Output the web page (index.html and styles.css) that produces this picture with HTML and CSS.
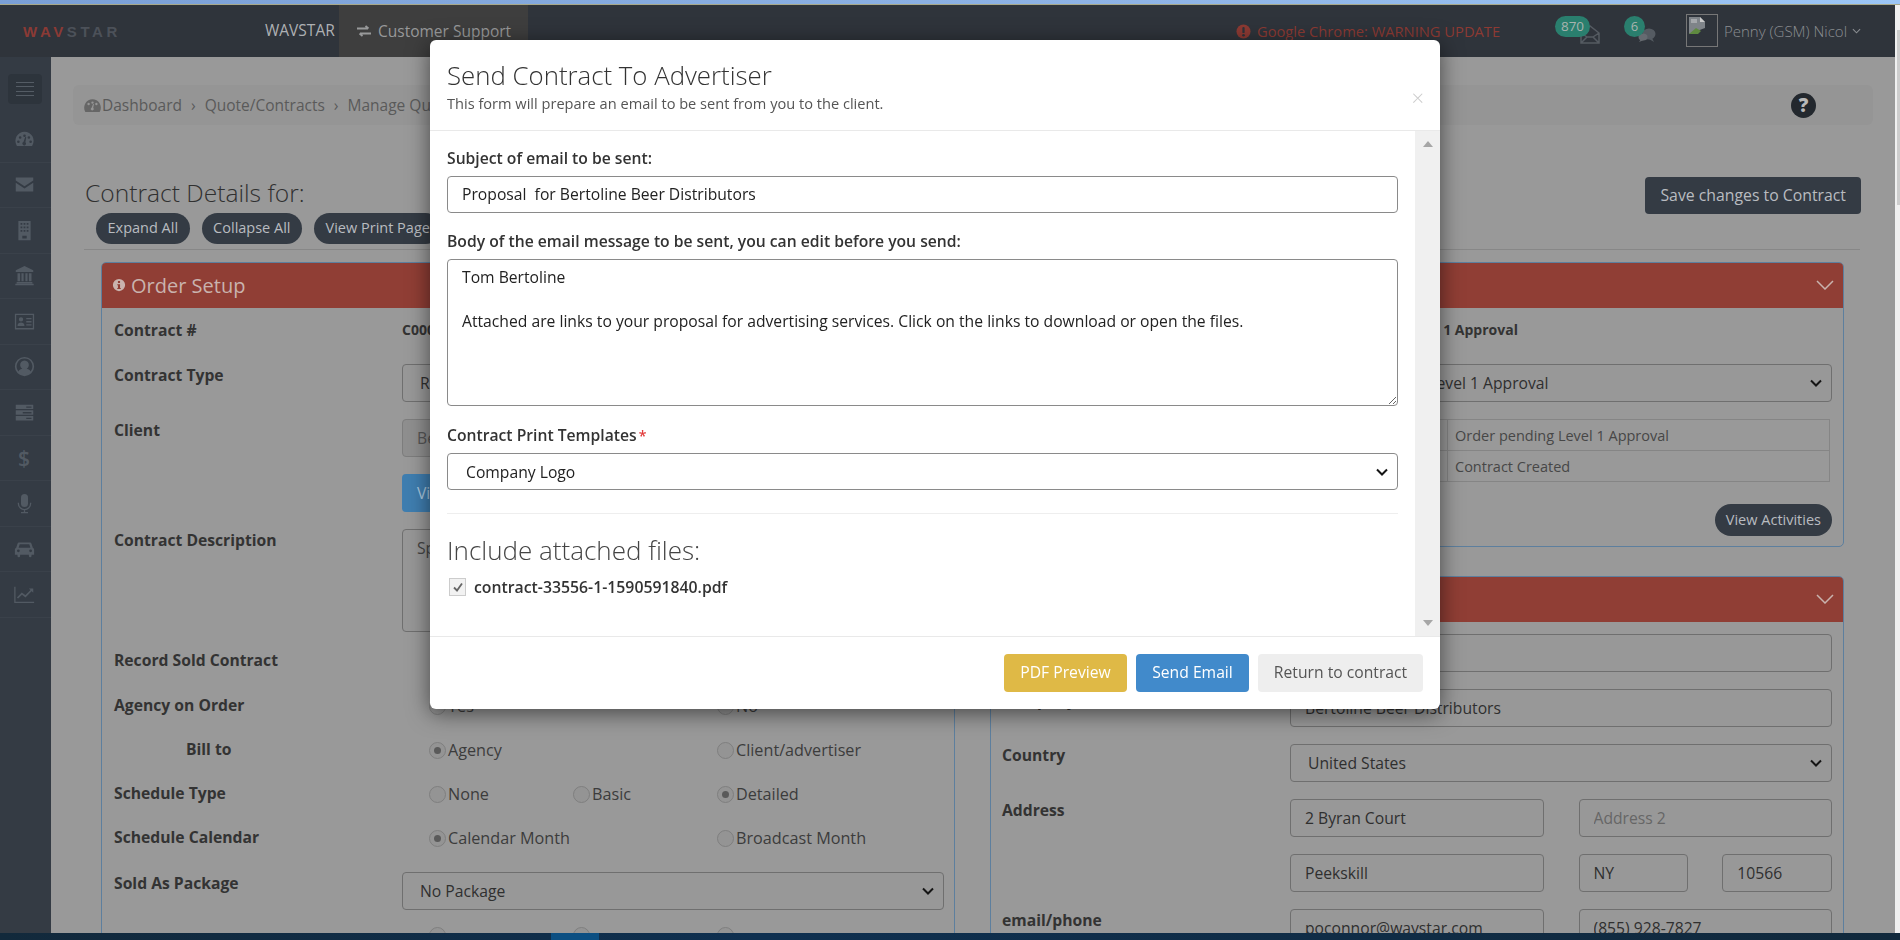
FILE: index.html
```html
<!DOCTYPE html>
<html lang="en">
<head>
<meta charset="utf-8">
<title>Send Contract To Advertiser</title>
<link rel="stylesheet" href="styles.css">
</head>
<body>
<div class="strip"></div>
<div class="window">
  <div class="app">
    <header class="topbar">
      <div class="logo"><span class="logo-a">WAV</span><span class="logo-b">STAR</span></div>
      <div class="brand">WAVSTAR</div>
      <div class="support">
        <svg class="swap" viewBox="0 0 16 12"><path d="M1 3.500h11M9.500 1l3 2.500M15 8.500H4M6.500 11l-3-2.500" fill="none" stroke="currentColor" stroke-width="1.800"/></svg>
        <span>Customer Support</span>
      </div>
      <div class="warning">
        <svg class="warn-ic" viewBox="0 0 16 16"><circle cx="8" cy="8" r="7.500" fill="currentColor"/><rect x="6.800" y="3.200" width="2.400" height="6.500" rx="1" fill="#2f343b"/><circle cx="8" cy="12" r="1.400" fill="#2f343b"/></svg>
        <span>Google Chrome: WARNING UPDATE</span>
      </div>
      <div class="notif notif-mail">
        <svg class="notif-ic" viewBox="0 0 20 19"><path d="M1 8 10 1l9 7v10H1zM1 18l6-6h6l6 6M1 8l6 4M19 8l-6 4" fill="none" stroke="currentColor" stroke-width="1.500"/></svg>
        <span class="badge badge-wide">870</span>
      </div>
      <div class="notif notif-chat">
        <svg class="notif-ic chat-ic" viewBox="0 0 18 15"><ellipse cx="11" cy="6" rx="6.500" ry="5.500" fill="currentColor"/><path d="M14 10l2 4-5-3z" fill="currentColor"/><ellipse cx="5" cy="9" rx="4.500" ry="3.500" fill="#666b71"/><path d="M3 11l-2 3 5-2z" fill="#666b71"/></svg>
        <span class="badge">6</span>
      </div>
      <div class="avatar">
        <svg class="broken" viewBox="0 0 18 20"><path d="M1 1h11l5 5v6L1 18z" fill="#7f8489"/><path d="M1 18l7-6 5 3-3 3z" fill="#5f8a40"/><path d="M3 3h6v4H3z" fill="#a5a8ac"/><path d="M12 1v5h5" fill="#c9c9c9"/></svg>
      </div>
      <div class="username">Penny (GSM) Nicol</div>
      <svg class="user-chev" viewBox="0 0 10 6"><path d="M1 1l4 4 4-4" fill="none" stroke="currentColor" stroke-width="1.200"/></svg>
    </header>

    <div class="main">
      <nav class="sidebar">
        <div class="side-top">
          <div class="toggle"><i></i><i></i><i></i><i></i></div>
        </div>
        <div class="side-item"><svg class="side-ic" viewBox="0 0 24 24"><path fill-rule="evenodd" d="M12 3a10.500 10.500 0 0 0-9 15.800c.300.500.8.700 1.300.7h15.400c.5 0 1-.2 1.300-.7A10.500 10.500 0 0 0 12 3zM7 8.200a1.500 1.500 0 1 1 0 3 1.500 1.500 0 0 1 0-3zm5-2a1.500 1.500 0 1 1 0 3 1.500 1.500 0 0 1 0-3zm5 2a1.500 1.500 0 1 1 0 3 1.500 1.500 0 0 1 0-3zM5 13a1.500 1.500 0 1 1 0 3 1.500 1.500 0 0 1 0-3zm14 0a1.500 1.500 0 1 1 0 3 1.500 1.500 0 0 1 0-3zM14 9.500l-1 5.700a2 2 0 1 1-2.200-.3l2-5.700z"/></svg></div>
        <div class="side-item"><svg class="side-ic" viewBox="0 0 24 24"><path d="M2 4h20v3.500L12 14 2 7.500zM2 10l10 6.500L22 10v10H2z"/></svg></div>
        <div class="side-item"><svg class="side-ic" viewBox="0 0 24 24"><path fill-rule="evenodd" d="M5 1h14v22H5zM7.500 3.500v2h2v-2zm3.500 0v2h2v-2zm3.500 0v2h2v-2zM7.500 7.500v2h2v-2zm3.500 0v2h2v-2zm3.500 0v2h2v-2zM7.500 11.500v2h2v-2zm3.500 0v2h2v-2zm3.500 0v2h2v-2zM9.500 18v3h5v-3z"/></svg></div>
        <div class="side-item"><svg class="side-ic" viewBox="0 0 24 24"><path d="M12 1 2 6v2h20V6zM4 9.500h3v9H4zM8.500 9.500h2.500v9H8.500zM13 9.500h2.500v9H13zM17 9.500h3v9h-3zM3 19.500h18V21H3zM1.500 21.500h21V23h-21z"/></svg></div>
        <div class="side-item"><svg class="side-ic" viewBox="0 0 24 24"><path fill-rule="evenodd" d="M1 3h22v18H1zM2.500 4.500v15h19v-15zM8 7a2.500 2.500 0 1 1 0 5 2.500 2.500 0 0 1 0-5zM4 17c0-3 2-4 4-4s4 1 4 4zM14 8h6v1.500h-6zM14 11.500h6V13h-6zM14 15h6v1.500h-6z"/></svg></div>
        <div class="side-item"><svg class="side-ic" viewBox="0 0 24 24"><path fill-rule="evenodd" d="M12 1a11 11 0 1 1 0 22 11 11 0 0 1 0-22zm0 2a9 9 0 0 0-7 14.700C6 15.500 8 15 9.500 14.500a5 5 0 1 1 5 0c1.500.5 3.500 1 4.500 3.200A9 9 0 0 0 12 3z"/></svg></div>
        <div class="side-item"><svg class="side-ic" viewBox="0 0 24 24"><path fill-rule="evenodd" d="M2 3h20v5H2zM2 9.500h20v5H2zM2 16h20v5H2zM14 5v1.500h6V5zM10 11.500V13h10v-1.500zM14 18v1.500h6V18z"/></svg></div>
        <div class="side-item side-dollar">$</div>
        <div class="side-item"><svg class="side-ic" viewBox="0 0 24 24"><path d="M8 5a4 4 0 0 1 8 0v7a4 4 0 0 1-8 0z"/><path d="M5 11v1a7 7 0 0 0 14 0v-1M12 19v3M8 22.500h8" fill="none" stroke="currentColor" stroke-width="1.500"/></svg></div>
        <div class="side-item"><svg class="side-ic" viewBox="0 0 24 24"><path fill-rule="evenodd" d="M6 5h12c1 0 1.700.6 2 1.500L21.500 11c1 .5 1.500 1.300 1.500 2.500V19h-3v1.500a1.500 1.500 0 0 1-3 0V19H7v1.500a1.500 1.500 0 0 1-3 0V19H1v-5.500c0-1.200.5-2 1.500-2.500L4 6.500C4.300 5.600 5 5 6 5zm.5 2L5.300 11h13.400l-1.200-4zM5 13a1.600 1.600 0 1 0 0 3.200A1.600 1.600 0 0 0 5 13zm14 0a1.600 1.600 0 1 0 0 3.200 1.600 1.600 0 0 0 0-3.200z"/></svg></div>
        <div class="side-item"><svg class="side-ic" viewBox="0 0 24 24"><path d="M1 3v18h22" fill="none" stroke="currentColor" stroke-width="1.500"/><path d="M4 16l5-5 4 3 8-8" fill="none" stroke="currentColor" stroke-width="2"/><path d="M17 5h5v5z"/></svg></div>
      </nav>

      <div class="content">
        <div class="crumbs">
          <svg class="crumb-ic" viewBox="0 0 24 20"><path fill-rule="evenodd" d="M12 1A12 12 0 0 0 1.500 18.300c.3.500.8.700 1.300.7h18.400c.5 0 1-.2 1.300-.7A12 12 0 0 0 12 1zM6.500 6.200a1.700 1.700 0 1 1 0 3.400 1.700 1.700 0 0 1 0-3.400zm5.500-2a1.700 1.700 0 1 1 0 3.400 1.700 1.700 0 0 1 0-3.400zm5.500 2a1.700 1.700 0 1 1 0 3.400 1.700 1.700 0 0 1 0-3.400zM14 8l-1 5.500a2 2 0 1 1-2.200-.3l2-5.200z"/></svg>
          <span class="crumb-first">Dashboard</span>
          <span class="crumb-sep">&rsaquo;</span>
          <span>Quote/Contracts</span>
          <span class="crumb-sep">&rsaquo;</span>
          <span>Manage Quotes/Contracts</span>
          <span class="help">?</span>
        </div>

        <div class="title-row">
          <div class="title-left">
            <h1 class="page-title">Contract Details for:</h1>
            <div class="pill-row">
              <span class="pill">Expand All</span>
              <span class="pill">Collapse All</span>
              <span class="pill">View Print Page</span>
            </div>
          </div>
          <span class="save-btn">Save changes to Contract</span>
        </div>

        <div class="columns">
          <section class="panel panel-left">
            <div class="panel-head">
              <svg class="info-ic" viewBox="0 0 16 16"><path fill-rule="evenodd" d="M8 1a7 7 0 1 1 0 14A7 7 0 0 1 8 1zM6.800 3.500v2.200h2.400V3.500zM6 7v1.300h.8v3H6v1.300h4v-1.300h-.8V7z"/></svg>
              <span>Order Setup</span>
            </div>
            <div class="panel-body">
              <div class="row row-short"><label class="lbl">Contract #</label><div class="val-bold">C00033556</div></div>
              <div class="row"><label class="lbl">Contract Type</label><select class="ctl"><option>Regular</option></select></div>
              <div class="row"><label class="lbl">Client</label><input class="ctl ctl-off" value="Bertoline Beer Distributors"></div>
              <div class="row"><span></span><div><span class="view-btn">View Client</span></div></div>
              <div class="row"><label class="lbl">Contract Description</label><textarea class="ctl ctl-area">Spot</textarea></div>
              <div class="row row-record"><label class="lbl">Record Sold Contract</label><div></div></div>
              <div class="row row-radio"><label class="lbl">Agency on Order</label>
                <div class="radios"><span class="opt"><i class="radio"></i>Yes</span><span></span><span class="opt"><i class="radio"></i>No</span></div></div>
              <div class="row row-radio"><label class="lbl lbl-in">Bill to</label>
                <div class="radios"><span class="opt"><i class="radio on"></i>Agency</span><span></span><span class="opt"><i class="radio"></i>Client/advertiser</span></div></div>
              <div class="row row-radio"><label class="lbl">Schedule Type</label>
                <div class="radios"><span class="opt"><i class="radio"></i>None</span><span class="opt"><i class="radio"></i>Basic</span><span class="opt"><i class="radio on"></i>Detailed</span></div></div>
              <div class="row row-radio row-tall"><label class="lbl">Schedule Calendar</label>
                <div class="radios"><span class="opt"><i class="radio on"></i>Calendar Month</span><span></span><span class="opt"><i class="radio"></i>Broadcast Month</span></div></div>
              <div class="row"><label class="lbl">Sold As Package</label><select class="ctl"><option>No Package</option></select></div>
              <div class="row row-radio"><span></span>
                <div class="radios"><span class="opt"><i class="radio"></i></span><span class="opt"><i class="radio"></i></span><span class="opt"><i class="radio"></i></span></div></div>
            </div>
          </section>

          <div class="col-right">
            <section class="panel panel-status">
              <div class="panel-head">
                <svg class="head-chev" viewBox="0 0 18 10"><path d="M1 1l8 8 8-8" fill="none" stroke="currentColor" stroke-width="1.500"/></svg>
              </div>
              <div class="panel-body">
                <div class="row row-short"><span></span><div class="val-bold val-status">Order pending Level 1 Approval</div></div>
                <div class="row"><span></span><select class="ctl ctl-status"><option>Order pending Level 1 Approval</option></select></div>
                <table class="log">
                  <tr><td class="log-date"></td><td>Order pending Level 1 Approval</td></tr>
                  <tr><td class="log-date"></td><td>Contract Created</td></tr>
                </table>
                <div class="act-row"><span class="pill pill-act">View Activities</span></div>
              </div>
            </section>

            <section class="panel panel-client">
              <div class="panel-head">
                <svg class="head-chev" viewBox="0 0 18 10"><path d="M1 1l8 8 8-8" fill="none" stroke="currentColor" stroke-width="1.500"/></svg>
              </div>
              <div class="panel-body">
                <div class="row row-wide"><span></span><input class="ctl"></div>
                <div class="row row-wide"><label class="lbl">Company</label><input class="ctl" value="Bertoline Beer Distributors"></div>
                <div class="row row-wide"><label class="lbl">Country</label><select class="ctl"><option>United States</option></select></div>
                <div class="row row-wide"><label class="lbl">Address</label>
                  <div class="split"><input class="ctl" value="2 Byran Court"><input class="ctl" placeholder="Address 2"></div></div>
                <div class="row row-wide"><span></span>
                  <div class="split"><input class="ctl" value="Peekskill">
                    <div class="split-small"><input class="ctl" value="NY"><input class="ctl" value="10566"></div></div></div>
                <div class="row row-wide"><label class="lbl">email/phone</label>
                  <div class="split"><input class="ctl" value="poconnor@waystar.com"><input class="ctl" value="(855) 928-7827"></div></div>
              </div>
            </section>
          </div>
        </div>
      </div>
    </div>
  </div>
  <div class="pagebar"><div class="pagebar-thumb"></div></div>
</div>
<div class="taskbar"><span class="task-active"></span></div>

<div class="modal" role="dialog">
  <div class="modal-head">
    <h2 class="modal-title">Send Contract To Advertiser</h2>
    <p class="modal-sub">This form will prepare an email to be sent from you to the client.</p>
    <span class="modal-close">&times;</span>
  </div>
  <div class="modal-body">
    <form class="modal-form">
      <label class="m-label">Subject of email to be sent:</label>
      <input class="m-input m-line" value="Proposal  for Bertoline Beer Distributors">
      <label class="m-label">Body of the email message to be sent, you can edit before you send:</label>
      <textarea class="m-input m-area">Tom Bertoline

Attached are links to your proposal for advertising services. Click on the links to download or open the files.</textarea>
      <label class="m-label m-label-tight">Contract Print Templates<span class="req">*</span></label>
      <select class="m-input m-select"><option>Company Logo</option></select>
      <hr class="m-rule">
      <h3 class="m-heading">Include attached files:</h3>
      <div class="m-file">
        <span class="check"><svg viewBox="0 0 12 12"><path d="M2 6.500l3 3 5-7" fill="none" stroke="#666" stroke-width="1.800"/></svg></span>
        <span>contract-33556-1-1590591840.pdf</span>
      </div>
    </form>
    <div class="m-scroll"><i class="arrow-up"></i><i class="arrow-down"></i></div>
  </div>
  <div class="modal-foot">
    <span class="btn btn-pdf">PDF Preview</span>
    <span class="btn btn-send">Send Email</span>
    <span class="btn btn-back">Return to contract</span>
  </div>
</div>
</body>
</html>
```
FILE: styles.css
```css
* { box-sizing: border-box; }
html, body { margin: 0; height: 940px; overflow: hidden; }
body { font-family: "Open Sans", "Liberation Sans", sans-serif; font-size: 15.7px; color: #3a3a3a; background: #999; }

.strip { height: 5px; background: linear-gradient(90deg, #7a9fd6, #8fb4e6 60%, #9cc6f6); border-bottom: 1px solid #a9a98a; }
.window { height: 928px; display: flex; overflow: hidden; }
.app { width: 1895px; display: flex; flex-direction: column; }
.pagebar { width: 5px; background: #f0f0f0; padding: 25px 0 0 2px; }
.pagebar-thumb { height: 175px; background: #cdcdcd; }
.taskbar { height: 7px; background: linear-gradient(90deg, #12293b, #0f3050 40%, #11293c); padding-left: 551px; }
.task-active { display: block; width: 48px; height: 7px; background: #0c4f82; }

/* top bar */
.topbar { height: 52px; flex: none; background: #2f343b; display: flex; align-items: center; color: #aeb0b3; }
.logo { width: 265px; padding-left: 23px; font: 700 15px "Liberation Sans", sans-serif; letter-spacing: 3.6px; }
.logo-a { color: #8b3a35; }
.logo-b { color: #4c5159; }
.brand { width: 74px; font-size: 15.5px; margin-top: -3px; }
.support { width: 189px; height: 52px; background: #3e3e3e; display: flex; align-items: center; gap: 6px; padding-left: 17px; font-size: 15.5px; color: #98999a; }
.swap { width: 16px; height: 12px; }
.warning { margin-left: 708px; width: 319px; display: flex; align-items: center; gap: 6px; color: #8d3a33; font-size: 14.7px; }
.warn-ic { width: 15px; height: 15px; }
.notif { position: relative; height: 52px; }
.notif-mail { width: 69px; }
.notif-chat { width: 62px; }
.badge { position: absolute; top: 11px; left: 0; min-width: 21px; height: 21px; border-radius: 10.5px; background: #2a7f6e; color: #a8b3ae; font-size: 13px; line-height: 20px; text-align: center; padding: 0 3px; }
.badge-wide { width: 35px; font-size: 13.5px; }
.notif-ic { position: absolute; color: #555b62; }
.notif-mail .notif-ic { left: 25px; top: 20px; width: 20px; height: 19px; }
.chat-ic { left: 14px; top: 23px; width: 18px; height: 15px; }
.avatar { width: 32px; height: 33px; border: 1px solid #777; margin-top: -1px; padding: 1px 0 0 1px; }
.broken { display: block; width: 18px; height: 20px; }
.username { margin-left: 6px; width: 128px; font-weight: 300; font-size: 15px; color: #8b8e92; }
.user-chev { width: 9px; height: 6px; color: #8b8e92; }

/* sidebar */
.main { flex: 1; display: flex; min-height: 0; }
.sidebar { width: 51px; flex: none; background: #343b44; color: #525a63; }
.side-top { height: 60px; padding: 17px 0 0 8px; }
.toggle { width: 34px; height: 30px; background: #2d343c; border-radius: 4px; display: flex; flex-direction: column; gap: 3.4px; padding: 8px 8px; }
.toggle i { display: block; height: 1px; background: #545c65; }
.side-item { height: 45.5px; border-bottom: 1px solid #3a414a; display: flex; align-items: center; justify-content: center; padding-right: 3px; }
.side-ic { width: 21px; height: 21px; fill: currentColor; }
.side-dollar { font-size: 21px; font-weight: 600; }

/* content */
.content { flex: 1; min-width: 0; padding: 28px 22px 0 22px; }
.crumbs { height: 40px; background: #959595; border-radius: 6px; display: flex; align-items: center; font-size: 15.5px; color: #5a5a5a; padding: 0 57px 0 11px; gap: 9px; }
.crumb-ic { width: 17px; height: 15px; fill: #666; }
.crumb-first { margin-left: -8px; }
.crumb-sep { font-size: 15.5px; color: #5a5a5a; }
.help { margin-left: auto; width: 25px; height: 25px; border-radius: 50%; background: #23282e; color: #b8b8b8; font-size: 19px; font-weight: 800; text-align: center; line-height: 25px; }
.title-row { display: flex; justify-content: space-between; align-items: flex-start; margin: 52px 13px 0 11px; height: 73px; border-bottom: 1px solid #878787; padding-left: 12px; }
.title-left { margin-left: -11px; }
.page-title { margin: 0; font-weight: 300; font-size: 24.6px; line-height: 32px; color: #303030; }
.pill-row { display: flex; gap: 12px; padding-left: 11px; margin-top: 4px; }
.pill { display: inline-block; height: 31px; line-height: 30px; padding: 0 11.5px; border-radius: 16px; background: #343b44; color: #b9bcc0; font-size: 14.5px; white-space: nowrap; }
.save-btn { height: 37px; line-height: 36px; padding: 0 15px; border-radius: 4px; background: #343b44; color: #b9bcc0; font-size: 15.8px; margin-right: -1px; }

.columns { display: flex; gap: 35px; margin-top: 12px; padding-left: 28px; }
.panel { border: 1px solid #5d7f9e; border-radius: 5px; overflow: hidden; }
.panel-left { width: 854px; height: 800px; flex: none; }
.col-right { width: 854px; flex: none; display: flex; flex-direction: column; gap: 29px; }
.panel-status { height: 285px; }
.panel-client { height: 500px; }
.panel-head { height: 46px; background: #903e35; color: #c9b3ae; display: flex; align-items: center; font-size: 20px; padding: 0 10px 0 11px; gap: 5px; margin: -1px -1px 0; }
.info-ic { width: 14px; height: 14px; fill: currentColor; }
.head-chev { width: 18px; height: 10px; margin-left: auto; }
.panel-body { padding: 12px 10px 0 12px; display: flex; flex-direction: column; gap: 17px; }
.col-right .panel-body { padding: 12px 11px 0 11px; }
.row { display: grid; grid-template-columns: 288px 1fr; align-items: start; }
.row-short { min-height: 27px; }
.row-record { min-height: 28px; }
.row-radio { min-height: 27px; }
.row-tall { min-height: 29px; }
.lbl { display: block; font-weight: 700; font-size: 15.7px; line-height: 22px; color: #333; }
.row-short .lbl, .row-short .val-bold { margin-top: -1px; }
.lbl-in { padding-left: 72px; }
.val-bold { font-weight: 700; font-size: 14px; line-height: 22px; color: #333; }
.val-status { margin-left: 8px; }
.ctl { display: block; width: 100%; height: 38px; border: 1px solid #6f6f6f; border-radius: 4px; background-color: #989898; color: #2f2f2f; font: 15.7px "Open Sans", sans-serif; padding: 0 14px; outline: none; }
select.ctl, .m-select {
  appearance: none;
  background-image: url("data:image/svg+xml,%3Csvg xmlns='http://www.w3.org/2000/svg' viewBox='0 0 12 8'%3E%3Cpath d='M1 1.500l5 5 5-5' fill='none' stroke='%23151515' stroke-width='2'/%3E%3C/svg%3E");
  background-repeat: no-repeat;
  background-position: right 9px center;
  background-size: 12px 8px;
}
select.ctl { padding-left: 17px; }
.ctl-off { background-color: #8f8f8f; color: #555; border-color: #7d7d7d; }
.ctl-area { height: 103px; resize: none; padding-top: 7px; background-color: #979797; color: #444; }
.ctl::placeholder { color: #666; }
.view-btn { display: block; height: 38px; width: 160px; line-height: 38px; padding-left: 15px; border-radius: 4px; background: #3f7eb0; color: #a9c8df; font-size: 15.7px; }
.radios { display: grid; grid-template-columns: 144px 144px 1fr; padding-left: 27px; }
.opt { display: flex; align-items: center; gap: 2px; line-height: 24px; color: #3c3c3c; font-size: 16.2px; }
.radio { width: 17px; height: 17px; border-radius: 50%; border: 1px solid #7f7f7f; background: #949494; flex: none; display: flex; align-items: center; justify-content: center; }
.radio.on::after { content: ""; width: 7px; height: 7px; border-radius: 50%; background: #5a5a5a; }
select.ctl-status { padding-left: 26px; }
.log { width: 828px; border-collapse: collapse; font-size: 14.5px; color: #474747; }
.log td { height: 31px; border: 1px solid #858585; padding: 0 7px; }
.log-date { width: 445px; }
.act-row { display: flex; justify-content: flex-end; margin-top: 5px; }
.pill-act { padding: 0 11px; height: 32px; line-height: 31px; }
.row-wide { min-height: 38px; }
.split { display: grid; grid-template-columns: 1fr 1fr; gap: 35px; }
.split-small { display: grid; grid-template-columns: 1fr 1fr; gap: 34px; }

/* modal */
.modal { position: fixed; left: 430px; top: 40px; width: 1010px; height: 669px; background: #fff; border-radius: 6px; box-shadow: 0 4px 22px rgba(0,0,0,.55); display: flex; flex-direction: column; overflow: hidden; }
.modal-head { height: 91px; flex: none; border-bottom: 1px solid #e9e9e9; padding: 16px 17px 0; position: relative; }
.modal-title { margin: 0; font-weight: 300; font-size: 25.8px; line-height: 38px; color: #333; }
.modal-sub { margin: -1px 0 0; font-size: 14.6px; line-height: 20px; color: #555; }
.modal-close { position: absolute; right: 16px; top: 43px; font-size: 22px; line-height: 28px; color: #ccc; font-weight: 300; }
.modal-body { flex: 1; min-height: 0; display: flex; }
.modal-form { flex: 1; min-width: 0; padding: 16px 17px 0; display: flex; flex-direction: column; }
.m-label { display: block; font-weight: 600; font-size: 15.7px; line-height: 22px; color: #333; margin-bottom: 7px; }
.m-label-tight { margin-bottom: 6px; }
.m-input { display: block; width: 100%; height: 37px; flex: none; border: 1px solid #8a8a8a; border-radius: 4px; background-color: #fff; font: 15.7px "Open Sans", sans-serif; color: #222; padding: 0 14px; margin-bottom: 17px; outline: none; }
.m-line { padding-bottom: 2px; }
.m-area { height: 147px; padding-top: 6px; line-height: 22px; margin-bottom: 18px; }
.m-select { padding-left: 18px; margin-bottom: 23px; }
.req { color: #e23b3b; margin-left: 2px; font-size: 14px; }
.m-rule { margin: 0; border: 0; border-top: 1px solid #eee; }
.m-heading { margin: 18px 0 0; font-weight: 300; font-size: 26px; line-height: 36px; color: #444; }
.m-file { display: flex; align-items: center; gap: 8px; margin-top: 8px; font-weight: 600; font-size: 15.8px; line-height: 22px; color: #333; padding-left: 2px; }
.check { width: 17px; height: 18px; border: 1px solid #ccc; background: #f2f2f2; display: flex; align-items: center; justify-content: center; }
.check svg { width: 12px; height: 12px; }
.m-scroll { width: 25px; flex: none; background: #f0f0f0; display: flex; flex-direction: column; justify-content: space-between; align-items: center; padding: 10px 0; }
.arrow-up { border: 5px solid transparent; border-top: 0; border-bottom: 6px solid #a6a6a6; width: 0; height: 0; }
.arrow-down { border: 5px solid transparent; border-bottom: 0; border-top: 6px solid #a6a6a6; width: 0; height: 0; }
.modal-foot { height: 73px; flex: none; border-top: 1px solid #e9e9e9; display: flex; justify-content: flex-end; gap: 9px; padding: 17px 17px 0 0; }
.btn { height: 38px; line-height: 37px; border-radius: 4px; text-align: center; font-size: 15.7px; }
.btn-pdf { width: 123px; background: #dfb946; color: #fff; }
.btn-send { width: 113px; background: #418acb; color: #fff; }
.btn-back { width: 165px; background: #eee; color: #555; }
```
